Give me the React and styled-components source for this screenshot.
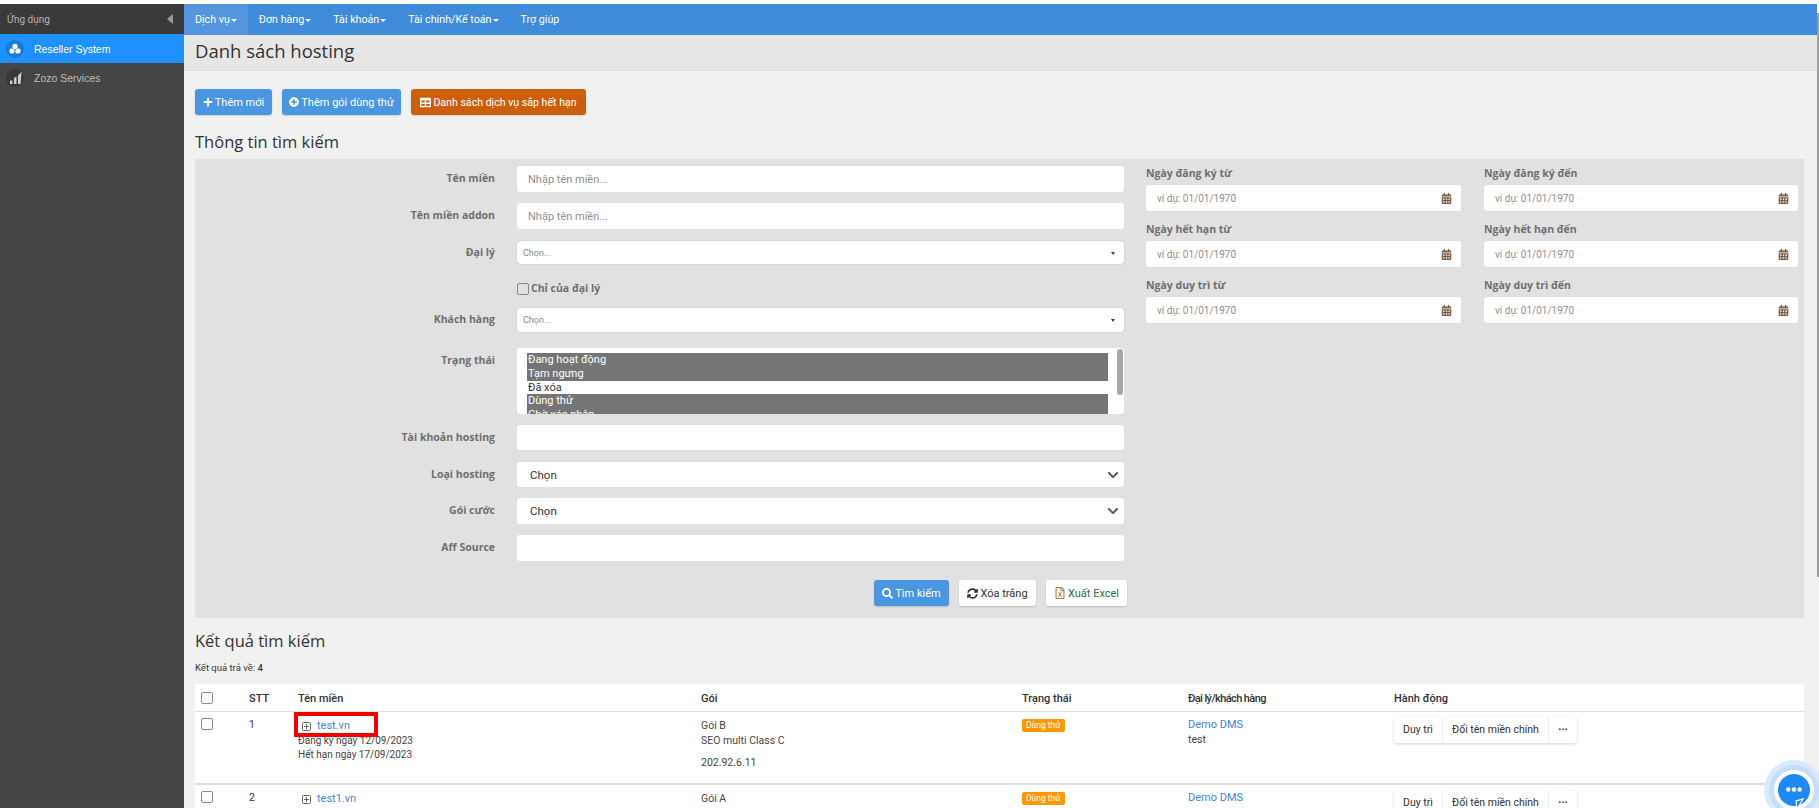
import React from "react";
import styled, { createGlobalStyle } from "styled-components";
import {
    FaCalendarAlt,
    FaChevronDown,
    FaPlus,
    FaPlusCircle,
    FaRegFileExcel,
    FaSearch,
    FaSyncAlt,
    FaTable,
} from "react-icons/fa";

const GlobalStyle = createGlobalStyle`
    html, body {
        margin: 0;
        padding: 0;
        height: 100%;
        overflow: hidden;
        background: #fff;
    }
    * {
        box-sizing: border-box;
    }
    input, select, button {
        font-family: inherit;
    }
`;

const Page = styled.div`
    display: flex;
    height: 808px;
    padding-top: 4px;
    overflow: hidden;
    font-family: Roboto, "Liberation Sans", sans-serif;
    font-size: 11px;
    color: #333;
`;

const Sidebar = styled.aside`
    flex: 0 0 184px;
    background: #454545;
    font-family: "Liberation Sans", sans-serif;
`;

const SidebarHead = styled.div`
    display: flex;
    align-items: center;
    justify-content: space-between;
    height: 30px;
    padding: 0 11px 0 7px;
    background: #3a3a3a;
    color: #b4b4b4;
    font-family: Roboto, sans-serif;
    font-size: 10px;
`;

const CollapseArrow = styled.span`
    width: 0;
    height: 0;
    border-top: 5px solid transparent;
    border-bottom: 5px solid transparent;
    border-right: 6px solid #999;
`;

const SidebarItem = styled.div`
    display: flex;
    align-items: center;
    gap: 10px;
    height: 29px;
    padding-left: 6px;
    background: ${props => (props.$active ? "#1e90ff" : "transparent")};
    color: ${props => (props.$active ? "#fff" : "#bdbdbd")};
    font-size: 10.5px;
`;

const SidebarIcon = styled.span`
    display: flex;
    align-items: center;
    justify-content: center;
    width: 18px;
    height: 18px;
    border-radius: 50%;
    background: ${props => (props.$active ? "#1b78d4" : "#383838")};
`;

const Main = styled.main`
    flex: 1;
    min-width: 0;
    background: #f1f1f1;
`;

const Navbar = styled.nav`
    display: flex;
    height: 31px;
    background: #3f8ad9;
    color: #fff;
`;

const NavItem = styled.a`
    display: flex;
    align-items: center;
    gap: 1px;
    height: 100%;
    padding: 0 11px;
    background: ${props => (props.$active ? "#5495dd" : "transparent")};
    font-size: 10.7px;
`;

const Caret = styled.span`
    width: 0;
    height: 0;
    margin-top: 1px;
    border-top: 3px solid #fff;
    border-left: 3px solid transparent;
    border-right: 3px solid transparent;
`;

const TitleBar = styled.div`
    display: flex;
    align-items: center;
    height: 36px;
    padding: 0 0 5px 11px;
    background: #e6e6e6;
    border-bottom: 1px solid #dcdcdc;
`;

const PageTitle = styled.h1`
    margin: 0;
    font-family: "Open Sans", sans-serif;
    font-size: 18.5px;
    font-weight: 400;
    color: #333;
`;

const Content = styled.div`
    padding: 18px 13px 0 11px;
`;

const Toolbar = styled.div`
    display: flex;
    gap: 10px;
`;

const Button = styled.button`
    display: inline-flex;
    align-items: center;
    justify-content: center;
    gap: 2px;
    height: 26px;
    width: ${props => props.$width}px;
    padding: 0;
    border: 0;
    border-radius: 3px;
    background: ${props => props.$bg || "#fff"};
    color: ${props => props.$color || "#333"};
    font-size: ${props => props.$size || 11}px;
    box-shadow: 0 1px 2px rgba(0, 0, 0, 0.15);
`;

const SectionTitle = styled.h2`
    margin: ${props => props.$top}px 0 5px;
    font-family: "Open Sans", sans-serif;
    font-size: 16.5px;
    font-weight: 400;
    line-height: 24px;
    color: #333;
`;

const SearchPanel = styled.section`
    display: flex;
    padding: 7px 8px 12px 0;
    background: #e1e1e1;
`;

const LeftForm = styled.div`
    flex: 0 0 951px;
`;

const FormRow = styled.div`
    display: grid;
    grid-template-columns: 300px 607px;
    column-gap: 22px;
    align-items: ${props => (props.$top ? "start" : "center")};
    margin-bottom: ${props => props.$gap}px;
`;

const FieldLabel = styled.label`
    padding: ${props => (props.$top ? "5px 0 0" : "0 0 2px")};
    font-family: "Open Sans", sans-serif;
    font-size: 10.5px;
    font-weight: 700;
    line-height: 14px;
    color: #6e6e6e;
    text-align: right;
`;

const TextField = styled.input`
    display: block;
    width: 100%;
    height: ${props => props.$h || 26}px;
    padding: 0 11px;
    border: 0;
    border-radius: 3px;
    outline: 0;
    background: #fff;
    font-size: 11px;
    &::placeholder {
        color: #8f8f8f;
        opacity: 1;
    }
`;

const ComboBox = styled.div`
    display: flex;
    align-items: center;
    justify-content: space-between;
    height: ${props => props.$h}px;
    padding: 0 9px 0 6px;
    border-radius: 3px;
    background: #fff;
    box-shadow: 0 0 1px rgba(0, 0, 0, 0.45);
    color: #888;
    font-size: 9px;
`;

const ComboCaret = styled(Caret)`
    border-top-color: #444;
    border-width: 3px 2.5px 0;
`;

const SelectBox = styled.div`
    display: flex;
    align-items: center;
    justify-content: space-between;
    height: ${props => props.$h}px;
    padding: 0 5px 0 13px;
    border-radius: 3px;
    background: #fff;
    color: #333;
    font-size: 11.5px;
    svg {
        color: #555;
    }
`;

const CheckLine = styled.label`
    display: flex;
    align-items: center;
    gap: 2px;
    height: 12px;
    font-family: "Open Sans", sans-serif;
    font-size: 10.5px;
    font-weight: 700;
    color: #6e6e6e;
`;

const CheckText = styled.span`
    margin-bottom: 2px;
`;

const CheckBox = styled.span`
    display: block;
    flex: none;
    width: 12px;
    height: 12px;
    border: 1px solid #8a8a8a;
    border-radius: 2px;
`;

const ListBox = styled.div`
    position: relative;
    height: 66px;
    padding: 5px 16px 0 10px;
    overflow: hidden;
    border-radius: 3px;
    background: #fff;
`;

const ListOption = styled.div`
    height: ${props => props.$h || 14}px;
    padding-left: 1px;
    background: ${props => (props.$selected ? "#757575" : "transparent")};
    color: ${props => (props.$selected ? "#fff" : "#333")};
    font-size: 11px;
    line-height: 13.5px;
`;

const ListThumb = styled.span`
    position: absolute;
    top: 1px;
    right: 1px;
    width: 6px;
    height: 46px;
    border-radius: 3px;
    background: #a8a8a8;
`;

const FormActions = styled.div`
    display: flex;
    justify-content: flex-end;
    gap: 10px;
    padding-top: 8px;
    margin-right: 19px;
`;

const RightForm = styled.div`
    flex: 1;
    display: grid;
    grid-template-columns: 315px 314px;
    column-gap: 23px;
    row-gap: 11px;
    align-content: start;
`;

const DateLabel = styled.div`
    margin-bottom: 5px;
    font-family: "Open Sans", sans-serif;
    font-size: 10.5px;
    font-weight: 700;
    line-height: 14px;
    color: #6e6e6e;
`;

const DateBox = styled.div`
    display: flex;
    align-items: center;
    justify-content: space-between;
    height: 26px;
    padding: 0 9px 0 11px;
    border-radius: 3px;
    background: #fff;
    color: #8f8f8f;
    font-size: 10px;
    svg {
        color: #7a5f48;
    }
`;

const ResultCount = styled.div`
    margin: 8px 0 9px;
    font-size: 9.5px;
    line-height: 14px;
    color: #333;
    b {
        font-weight: 500;
    }
`;

const Table = styled.div`
    background: #fff;
`;

const TableRow = styled.div`
    position: relative;
    display: grid;
    grid-template-columns: 54px 49px 403px 321px 166px 206px 1fr;
    height: ${props => props.$h}px;
    padding-top: ${props => props.$pad}px;
    border-bottom: ${props => props.$line}px solid #dedede;
    font-size: 10.5px;
    line-height: 14px;
`;

const HeadCell = styled.div`
    font-size: 11px;
    font-weight: 500;
    color: #333;
    letter-spacing: ${props => (props.$tight ? "-0.6px" : "0")};
`;

const CheckCell = styled.div`
    padding-left: 6px;
`;

const DomainLine = styled.div`
    display: flex;
    align-items: center;
    gap: 6px;
    padding: 1px 0 0 4px;
`;

const DomainLink = styled.a`
    color: #3f86dd;
    font-size: 11px;
`;

const ExpandIcon = styled.svg`
    display: block;
    width: 9px;
    height: 9px;
    color: #666;
`;

const MetaLine = styled.div`
    margin-top: ${props => props.$top || 0}px;
    font-size: ${props => props.$size || 10.5}px;
    line-height: ${props => props.$lh || 13.5}px;
    color: #444;
    white-space: nowrap;
`;

const StatusBadge = styled.span`
    display: inline-block;
    height: 13px;
    padding: 0 4px;
    border-radius: 2px;
    background: #ff9800;
    color: #fff;
    font-size: 8.5px;
    line-height: 13px;
`;

const AgentLink = styled.a`
    display: block;
    color: #3f86dd;
    font-size: 11px;
`;

const ActionGroup = styled.div`
    display: inline-flex;
    height: 26px;
    margin-top: -1px;
    border-radius: 3px;
    background: #fff;
    box-shadow: 0 1px 3px rgba(0, 0, 0, 0.18);
`;

const ActionItem = styled.span`
    display: flex;
    align-items: center;
    justify-content: center;
    width: ${props => props.$width}px;
    border-left: ${props => (props.$first ? "0" : "1px solid #eee")};
    color: #333;
    font-size: 10.5px;
`;

const Highlight = styled.div`
    position: absolute;
    top: 0;
    left: 99px;
    width: 84px;
    height: 25px;
    border: 4px solid #f00000;
    pointer-events: none;
`;

const ScrollTrack = styled.div`
    flex: 0 0 2px;
    margin-top: -4px;
    border-top: 13px solid #fff;
    background: #f1f1f1;
`;

const ScrollThumb = styled.div`
    height: 564px;
    background: #a0a0a0;
`;

const ChatWidget = styled.div`
    position: fixed;
    left: 1764px;
    top: 760px;
    width: 60px;
    height: 60px;
`;

const resellerIcon = (
    <svg width="12" height="12" viewBox="0 0 12 12" fill="#fff" stroke="#1b78d4" strokeWidth="0.6">
        <circle cx="3" cy="8" r="3" />
        <circle cx="9" cy="8" r="3" />
        <circle cx="6" cy="3.5" r="3" />
    </svg>
);

const zozoIcon = (
    <svg width="13" height="14" viewBox="0 0 13 14" fill="#cfcfcf">
        <path d="M1 9.5h2.5V13H1z" />
        <path d="M5 7l2.5-1.5V13H5z" />
        <path d="M9 4.5L12.5 1 11.5 13H9z" />
    </svg>
);

const navItems = [
    { label: "Dịch vụ", caret: true, active: true },
    { label: "Đơn hàng", caret: true },
    { label: "Tài khoản", caret: true },
    { label: "Tài chính/Kế toán", caret: true },
    { label: "Trợ giúp" },
];

const dateFields = [
    "Ngày đăng ký từ",
    "Ngày đăng ký đến",
    "Ngày hết hạn từ",
    "Ngày hết hạn đến",
    "Ngày duy trì từ",
    "Ngày duy trì đến",
];

const rows = [
    {
        id: 1,
        domain: "test.vn",
        registered: "Đăng ký ngày 12/09/2023",
        expires: "Hết hạn ngày 17/09/2023",
        plan: "Gói B",
        planType: "SEO multi Class C",
        ip: "202.92.6.11",
        owner: "test",
    },
    {
        id: 2,
        domain: "test1.vn",
        registered: "Đăng ký ngày 12/09/2023",
        expires: "Hết hạn ngày 17/09/2023",
        plan: "Gói A",
        planType: "SEO multi Class C",
        ip: "202.92.6.11",
        owner: "test",
    },
];

const App = () => {
    const renderRow = (row, i) => (
        <TableRow key={row.id} $h={73} $pad={6} $line={2}>
            <CheckCell>
                <CheckBox />
            </CheckCell>
            <div>{row.id}</div>
            <div>
                <DomainLine>
                    <ExpandIcon viewBox="0 0 9 9" fill="none" stroke="currentColor">
                        <rect x="0.5" y="0.5" width="8" height="8" rx="1" />
                        <path d="M2 4.5h5M4.5 2v5" />
                    </ExpandIcon>
                    <DomainLink>{row.domain}</DomainLink>
                </DomainLine>
                <MetaLine $top={1} $size={10}>{row.registered}</MetaLine>
                <MetaLine $size={10}>{row.expires}</MetaLine>
            </div>
            <div>
                <MetaLine $lh={15}>{row.plan}</MetaLine>
                <MetaLine $lh={15}>{row.planType}</MetaLine>
                <MetaLine $lh={15} $top={7}>{row.ip}</MetaLine>
            </div>
            <div>
                <StatusBadge>Dùng thử</StatusBadge>
            </div>
            <div>
                <AgentLink>Demo DMS</AgentLink>
                <MetaLine $lh={15}>{row.owner}</MetaLine>
            </div>
            <div>
                <ActionGroup>
                    <ActionItem $first $width={48}>Duy trì</ActionItem>
                    <ActionItem $width={106}>Đổi tên miền chính</ActionItem>
                    <ActionItem $width={29}>
                        <b>···</b>
                    </ActionItem>
                </ActionGroup>
            </div>
            {i === 0 && <Highlight />}
        </TableRow>
    );

    return (
        <Page>
            <GlobalStyle />
            <Sidebar>
                <SidebarHead>
                    Ứng dụng
                    <CollapseArrow />
                </SidebarHead>
                <SidebarItem $active>
                    <SidebarIcon $active>{resellerIcon}</SidebarIcon>
                    Reseller System
                </SidebarItem>
                <SidebarItem>
                    <SidebarIcon>{zozoIcon}</SidebarIcon>
                    Zozo Services
                </SidebarItem>
            </Sidebar>

            <Main>
                <Navbar>
                    {navItems.map(item => (
                        <NavItem key={item.label} $active={item.active}>
                            {item.label}
                            {item.caret && <Caret />}
                        </NavItem>
                    ))}
                </Navbar>
                <TitleBar>
                    <PageTitle>Danh sách hosting</PageTitle>
                </TitleBar>

                <Content>
                    <Toolbar>
                        <Button $width={77} $bg="#4a96e0" $color="#fff">
                            <FaPlus size={10} />
                            Thêm mới
                        </Button>
                        <Button $width={119} $bg="#4a96e0" $color="#fff">
                            <FaPlusCircle size={10} />
                            Thêm gói dùng thử
                        </Button>
                        <Button $width={175} $bg="#cc5f0e" $color="#fff" $size={10.6}>
                            <FaTable size={11} />
                            Danh sách dịch vụ sắp hết hạn
                        </Button>
                    </Toolbar>

                    <SectionTitle $top={15}>Thông tin tìm kiếm</SectionTitle>
                    <SearchPanel>
                        <LeftForm>
                            <FormRow $gap={11}>
                                <FieldLabel>Tên miền</FieldLabel>
                                <TextField placeholder="Nhập tên miền..." />
                            </FormRow>
                            <FormRow $gap={12}>
                                <FieldLabel>Tên miền addon</FieldLabel>
                                <TextField placeholder="Nhập tên miền..." />
                            </FormRow>
                            <FormRow $gap={19}>
                                <FieldLabel>Đại lý</FieldLabel>
                                <ComboBox $h={23}>
                                    Chọn...
                                    <ComboCaret />
                                </ComboBox>
                            </FormRow>
                            <FormRow $gap={13}>
                                <span />
                                <CheckLine>
                                    <CheckBox />
                                    <CheckText>Chỉ của đại lý</CheckText>
                                </CheckLine>
                            </FormRow>
                            <FormRow $gap={16}>
                                <FieldLabel>Khách hàng</FieldLabel>
                                <ComboBox $h={24}>
                                    Chọn...
                                    <ComboCaret />
                                </ComboBox>
                            </FormRow>
                            <FormRow $gap={11} $top>
                                <FieldLabel $top>Trạng thái</FieldLabel>
                                <ListBox>
                                    <ListOption $selected>Đang hoạt động</ListOption>
                                    <ListOption $selected>Tạm ngưng</ListOption>
                                    <ListOption $h={13}>Đã xóa</ListOption>
                                    <ListOption $selected>Dùng thử</ListOption>
                                    <ListOption $selected>Chờ xác nhận</ListOption>
                                    <ListThumb />
                                </ListBox>
                            </FormRow>
                            <FormRow $gap={12}>
                                <FieldLabel>Tài khoản hosting</FieldLabel>
                                <TextField $h={25} />
                            </FormRow>
                            <FormRow $gap={11}>
                                <FieldLabel>Loại hosting</FieldLabel>
                                <SelectBox $h={25}>
                                    Chọn
                                    <FaChevronDown size={12} />
                                </SelectBox>
                            </FormRow>
                            <FormRow $gap={11}>
                                <FieldLabel>Gói cước</FieldLabel>
                                <SelectBox $h={26}>
                                    Chọn
                                    <FaChevronDown size={12} />
                                </SelectBox>
                            </FormRow>
                            <FormRow $gap={11}>
                                <FieldLabel>Aff Source</FieldLabel>
                                <TextField />
                            </FormRow>
                            <FormActions>
                                <Button $width={75} $bg="#4a96e0" $color="#fff">
                                    <FaSearch size={11} />
                                    Tìm kiếm
                                </Button>
                                <Button $width={77}>
                                    <FaSyncAlt size={11} />
                                    Xóa trắng
                                </Button>
                                <Button $width={81} $color="#2e6b4a">
                                    <FaRegFileExcel size={12} color="#a5894f" />
                                    Xuất Excel
                                </Button>
                            </FormActions>
                        </LeftForm>

                        <RightForm>
                            {dateFields.map(label => (
                                <div key={label}>
                                    <DateLabel>{label}</DateLabel>
                                    <DateBox>
                                        ví dụ: 01/01/1970
                                        <FaCalendarAlt size={11} />
                                    </DateBox>
                                </div>
                            ))}
                        </RightForm>
                    </SearchPanel>

                    <SectionTitle $top={11}>Kết quả tìm kiếm</SectionTitle>
                    <ResultCount>
                        Kết quả trả về: <b>4</b>
                    </ResultCount>

                    <Table>
                        <TableRow $h={28} $pad={8} $line={1}>
                            <CheckCell>
                                <CheckBox />
                            </CheckCell>
                            <HeadCell>STT</HeadCell>
                            <HeadCell>Tên miền</HeadCell>
                            <HeadCell>Gói</HeadCell>
                            <HeadCell>Trạng thái</HeadCell>
                            <HeadCell $tight>Đại lý/khách hàng</HeadCell>
                            <HeadCell>Hành động</HeadCell>
                        </TableRow>
                        {rows.map(renderRow)}
                    </Table>
                </Content>
            </Main>

            <ScrollTrack>
                <ScrollThumb />
            </ScrollTrack>

            <ChatWidget>
                <svg width="60" height="60" viewBox="0 0 60 60">
                    <circle cx="30" cy="30" r="30" fill="#d9e9fb" />
                    <circle cx="30" cy="30" r="25" fill="#c4dffa" />
                    <circle cx="30" cy="30" r="20" fill="#fff" />
                    <circle cx="30" cy="30" r="16" fill="#1e88f5" />
                    <path d="M32 41l1 8 6-10z" fill="#1e88f5" stroke="#fff" strokeWidth="1.2" />
                    <circle cx="24.3" cy="29.5" r="2.2" fill="#fff" />
                    <circle cx="30" cy="29.5" r="2.2" fill="#fff" />
                    <circle cx="35.7" cy="29.5" r="2.2" fill="#fff" />
                </svg>
            </ChatWidget>
        </Page>
    );
};

export default App;
